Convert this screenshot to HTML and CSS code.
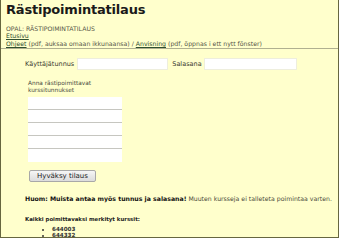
FILE: index.html
```html
<!DOCTYPE html>
<html lang="fi">
<head>
<meta charset="utf-8">
<title>Rästipoimintatilaus</title>
<link rel="stylesheet" href="styles.css">
</head>
<body>
<div class="page">
  <div class="header">
    <h1 class="title">Rästipoimintatilaus</h1>
    <div class="meta">
      <div class="line">OPAL: RÄSTIPOIMINTATILAUS</div>
      <div class="line"><a href="#">Etusivu</a></div>
      <div class="line"><a href="#">Ohjeet</a> (pdf, auksaa omaan ikkunaansa) / <a href="#">Anvisning</a> (pdf, öppnas i ett nytt fönster)</div>
    </div>
  </div>
  <form class="form">
    <div class="login">
      <label class="lbl">Käyttäjätunnus</label>
      <input class="field user" type="text">
      <label class="lbl pw">Salasana</label>
      <input class="field pass" type="password">
    </div>
    <div class="hint">Anna rästipoimittavat<br>kurssitunnukset</div>
    <div class="codes">
      <input class="code" type="text">
      <input class="code" type="text">
      <input class="code" type="text">
      <input class="code" type="text">
      <input class="code" type="text">
    </div>
    <button class="submit" type="button">Hyväksy tilaus</button>
    <p class="note"><b>Huom: Muista antaa myös tunnus ja salasana!</b> Muuten kursseja ei talleteta poimintaa varten.</p>
    <h6 class="listhead">Kaikki poimittavaksi merkityt kurssit:</h6>
    <ul class="courses">
      <li>644003</li>
      <li>644332</li>
    </ul>
  </form>
</div>
</body>
</html>
```

FILE: styles.css
```css
html, body {
  margin: 0;
  padding: 0;
  background: #ffffff;
}
body {
  font-family: "DejaVu Sans", Verdana, sans-serif;
  color: #3a3a30;
  overflow: hidden;
}
.page {
  box-sizing: border-box;
  width: 339px;
  height: 238px;
  background: #ffffcc;
  border-left: 1px solid #66663f;
  border-right: 1px solid #66663f;
  border-bottom: 1px solid #66663f;
}
.header {
  padding: 0 5px 0.8px;
  border-bottom: 1px solid #b0b090;
}
.title {
  margin: 0;
  padding-top: 1px;
  font-size: 13px;
  line-height: 18px;
  font-weight: bold;
  letter-spacing: -0.2px;
  color: #1a1a1a;
}
.meta {
  margin-top: 6px;
  font-size: 6.2px;
}
.line {
  line-height: 7.4px;
  color: #555548;
}
.line a {
  color: #2f4f2f;
}
.form {
  padding: 9px 0 0 24px;
  font-size: 6.5px;
}
.login {
  display: flex;
  align-items: center;
  height: 12px;
}
.lbl {
  color: #3a3a30;
}
.field {
  box-sizing: border-box;
  height: 12px;
  margin: 0;
  padding: 0;
  border: 1px solid #eeeedd;
  background: #ffffff;
}
.user {
  width: 91px;
  margin-left: 3px;
}
.pw {
  margin-left: 4px;
}
.pass {
  width: 93px;
  margin-left: 2px;
}
.hint {
  margin: 10px 0 0 3px;
  font-size: 5.8px;
  line-height: 6.7px;
  color: #4a4a40;
}
.codes {
  margin: 3.6px 0 0 3px;
  display: flex;
  flex-direction: column;
  width: 94px;
}
.code {
  box-sizing: border-box;
  height: 13px;
  margin: 0;
  padding: 0;
  border: none;
  border-bottom: 1px solid #c6c6c0;
  background: #ffffff;
}
.code:last-child {
  border-bottom: none;
}
.submit {
  display: block;
  margin: 8px 0 0 4px;
  box-sizing: border-box;
  width: 67px;
  height: 12px;
  padding: 0;
  font-family: "DejaVu Sans", Verdana, sans-serif;
  font-size: 7px;
  line-height: 10px;
  color: #222;
  background: linear-gradient(#f6f6f6, #dcdcdc);
  border: 1px solid #a8a8a8;
  border-radius: 2px;
}
.note {
  margin: 12.5px 0 0;
  line-height: 8px;
  font-size: 6.2px;
  color: #4a4a3a;
}
.note b {
  color: #111;
}
.listhead {
  margin: 13px 0 0;
  line-height: 7px;
  font-size: 5.4px;
  font-weight: bold;
  color: #222;
}
.courses {
  margin: 3.5px 0 0;
  padding-left: 27px;
  line-height: 6px;
  font-size: 5.6px;
  font-weight: bold;
  color: #333;
}
```
